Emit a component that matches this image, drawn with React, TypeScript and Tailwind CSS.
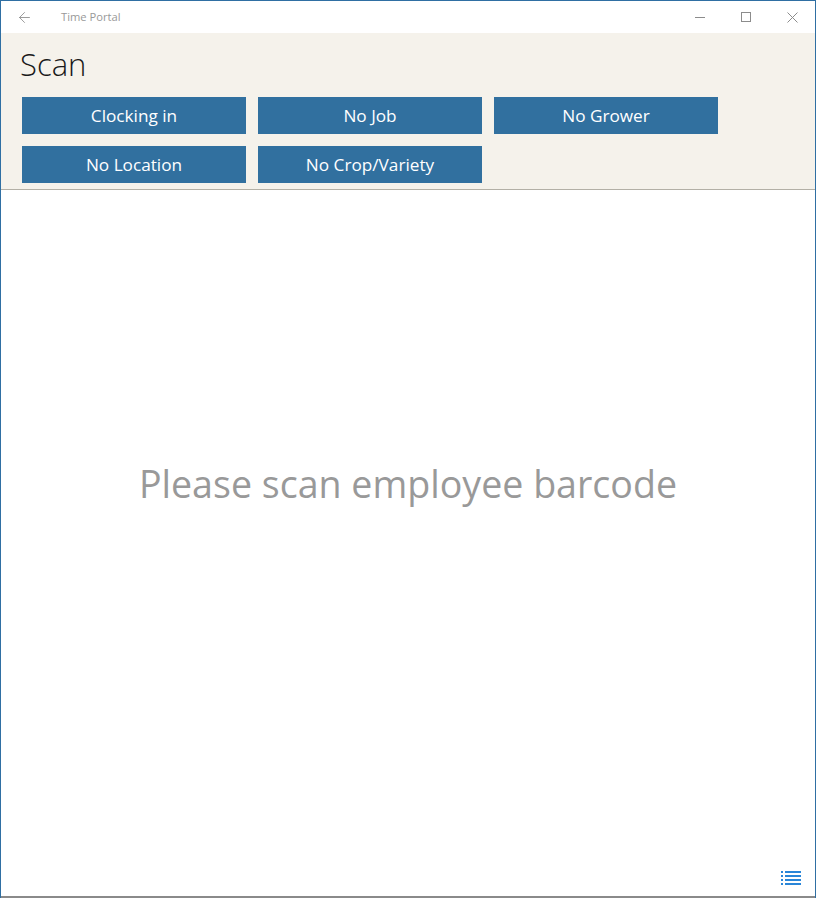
import React from "react";
import { ArrowLeft } from "lucide-react";

const filters = ["Clocking in", "No Job", "No Grower", "No Location", "No Crop/Variety"];

export default function App() {
  return (
    <div className="w-[816px] h-[898px] flex flex-col bg-white border-x border-t border-[#2f6fa3] font-['Open_Sans',sans-serif] overflow-hidden">
      <div className="h-8 shrink-0 flex items-center bg-white">
        <ArrowLeft className="w-[17px] h-[17px] ml-[15px] text-[#8f8f8f]" strokeWidth={1.25} />
        <span className="ml-[28px] text-[11.2px] text-[#999999]">Time Portal</span>
        <div className="ml-auto flex items-center">
          <div className="w-[46px] flex justify-center">
            <div className="w-[10px] h-px bg-[#8c8c8c]" />
          </div>
          <div className="w-[46px] flex justify-center">
            <div className="w-[10px] h-[10px] border border-[#8c8c8c]" />
          </div>
          <div className="w-[46px] flex justify-center">
            <svg width="11" height="11" viewBox="0 0 11 11" stroke="#8c8c8c" fill="none">
              <path d="M0.5 0.5 L10.5 10.5 M10.5 0.5 L0.5 10.5" />
            </svg>
          </div>
        </div>
      </div>

      <div className="h-[157px] shrink-0 bg-[#f5f2eb] border-b border-[#b3b0a6] px-[21px]">
        <h1 className="ml-[-2px] h-[64px] flex items-center pb-[1px] text-[31px] font-light text-[#1a1a1a]">Scan</h1>
        <div className="grid grid-cols-[224px_224px_224px] gap-x-3 gap-y-3">
          {filters.map((f) => (
            <button key={f} className="h-[37px] bg-[#31709f] text-white text-[17.2px] flex items-center justify-center">
              {f}
            </button>
          ))}
        </div>
      </div>

      <div className="flex-1 flex flex-col border-b-2 border-[#8a8a8a]">
        <div className="flex-1 flex items-center justify-center">
          <p className="text-[37.6px] text-[#999999] pb-[80px]">Please scan employee barcode</p>
        </div>
        <div className="h-[37px] flex justify-end items-center pr-[14px]">
          <svg width="20" height="14" viewBox="0 0 20 14" fill="#2a86d8">
            <rect x="0" y="0" width="2" height="2" />
            <rect x="4" y="0" width="16" height="2" />
            <rect x="0" y="4" width="2" height="2" />
            <rect x="4" y="4" width="16" height="2" />
            <rect x="0" y="8" width="2" height="2" />
            <rect x="4" y="8" width="16" height="2" />
            <rect x="0" y="12" width="2" height="2" />
            <rect x="4" y="12" width="16" height="2" />
          </svg>
        </div>
      </div>
    </div>
  );
}
